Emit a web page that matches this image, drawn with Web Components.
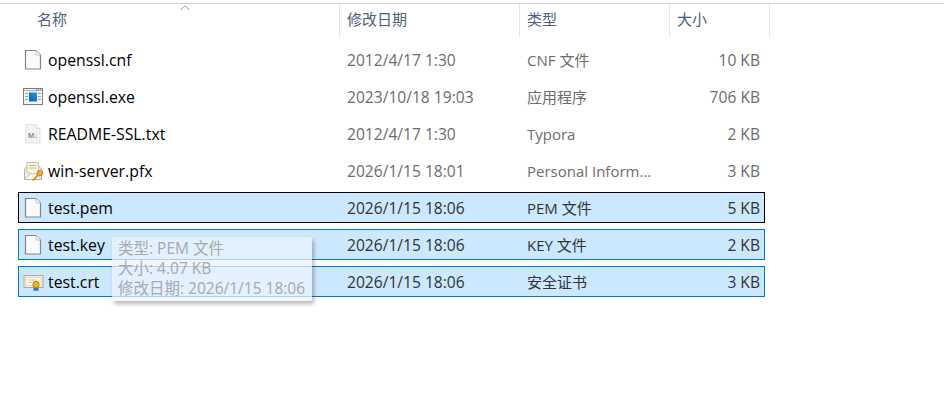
<!DOCTYPE html>
<html lang="zh-CN">
<head>
<meta charset="utf-8">
<title>test</title>
<style>
html, body { margin: 0; height: 100%; background: #fff; overflow: hidden; }
body { font-family: "Open Sans", "Noto Sans CJK SC", sans-serif; }
</style>
</head>
<body>
<file-list>
  <file-row slot="row" name="openssl.cnf" date="2012/4/17 1:30" type="CNF 文件" size="10 KB" icon="blank"></file-row>
  <file-row slot="row" name="openssl.exe" date="2023/10/18 19:03" type="应用程序" size="706 KB" icon="exe"></file-row>
  <file-row slot="row" name="README-SSL.txt" date="2012/4/17 1:30" type="Typora" size="2 KB" icon="md"></file-row>
  <file-row slot="row" name="win-server.pfx" date="2026/1/15 18:01" type="Personal Inform..." size="3 KB" icon="pfx"></file-row>
  <file-row slot="row" name="test.pem" date="2026/1/15 18:06" type="PEM 文件" size="5 KB" icon="blank" state="focus"></file-row>
  <file-row slot="row" name="test.key" date="2026/1/15 18:06" type="KEY 文件" size="2 KB" icon="blank" state="selected"></file-row>
  <file-row slot="row" name="test.crt" date="2026/1/15 18:06" type="安全证书" size="3 KB" icon="crt" state="selected"></file-row>
  <file-tip slot="tip">
    <div>类型: PEM 文件</div>
    <div>大小: 4.07 KB</div>
    <div>修改日期: 2026/1/15 18:06</div>
  </file-tip>
</file-list>

<script>
const icons = {
  blank: `<svg width="20" height="22" viewBox="0 0 20 22">
    <path d="M2.500 1.500H13L17.500 6V20H2.500Z" fill="#fafafa" stroke="#858585" stroke-width="1.200"/>
    <path d="M13 1.500V6H17.500" fill="#fff" stroke="#c0c0c0"/>
  </svg>`,
  exe: `<svg width="20" height="22" viewBox="0 0 20 22">
    <defs><linearGradient id="g" x1="1" y1="0" x2="0" y2="1"><stop offset="0" stop-color="#1c9be8"/><stop offset="1" stop-color="#0a62b4"/></linearGradient></defs>
    <rect x=".5" y="2.500" width="19" height="16" fill="#f4f4f4" stroke="#7d7d7d"/>
    <path d="M1 4.500H19" stroke="#b5b5b5"/>
    <path d="M13 3.500H18" stroke="#8a8a8a" stroke-dasharray="1 1"/>
    <rect x="6" y="6.500" width="8" height="9" fill="url(#g)"/>
    <path d="M2 7.500H5M2 10.500H5M2 13.500H5M15 7.500H18M15 10.500H18M15 13.500H18" stroke="#a5a5a5"/>
  </svg>`,
  md: `<svg width="20" height="22" viewBox="0 0 20 22">
    <path d="M3 1.500H13L17 5.500V20H3Z" fill="#f3f3f3" stroke="#e2e2e2"/>
    <path d="M13 1.500V5.500H17" fill="#fbfbfb" stroke="#dcdcdc"/>
    <text x="10" y="15" text-anchor="middle" font-family="Liberation Sans, sans-serif" font-size="7.500" font-weight="700" fill="#8e8e8e">M↓</text>
  </svg>`,
  pfx: `<svg width="22" height="22" viewBox="0 0 22 22">
    <path d="M2.500 9L6 5.500H16L19.500 9V19.500H2.500Z" fill="#ececec" stroke="#b5b2aa"/>
    <path d="M5 2.500H16.500V12L11 15L5 12Z" fill="#fbf5e2" stroke="#cbbf9c"/>
    <path d="M7 5.500H14.500M7 8H14.500" stroke="#c9b784"/>
    <path d="M2.500 19L9 13L11 14.500L13 13L19.500 19" fill="#f8f8f8" stroke="#c2bfb6"/>
    <circle cx="18" cy="13" r="2.800" fill="#e8a93a" stroke="#c98c1c"/>
    <path d="M16 15L10.500 20.500M12.500 18.500L14 20" stroke="#dd9d2c" stroke-width="2" fill="none"/>
  </svg>`,
  crt: `<svg width="22" height="22" viewBox="0 0 22 22">
    <rect x="2" y="4.500" width="19" height="12" fill="#f6f1e2" stroke="#b3a88e"/>
    <rect x="4" y="6.500" width="15" height="8" fill="#fdfbf3" stroke="#e0d8bf"/>
    <path d="M6 9H15M6 11.500H10" stroke="#cfc7aa"/>
    <path d="M11.500 15V20.500L13 19L14 20.500L15 19L16.500 20.500V15Z" fill="#2f6fc4"/>
    <circle cx="14" cy="13.500" r="3.200" fill="#eeb11f" stroke="#c6860f"/>
  </svg>`
};

const rowTpl = document.createElement('template');
rowTpl.innerHTML = `
<style>
:host {
    display: grid;
    grid-template-columns: 328px 180px 150px 83px;
    box-sizing: border-box;
    width: 747px;
    height: 31px;
    align-items: center;
    border: 1px solid transparent;
    font-size: 15.6px;
    color: #6d6d6d;
    white-space: nowrap;
}
:host([state="selected"]), :host([state="focus"]) {
    background: #cce8ff;
    color: #333;
}
:host([state="selected"]) { border-color: #0078d7; }
:host([state="focus"]) { border-color: #000; }
.name { display: flex; align-items: center; color: #000; font-size: 15.8px; }
.icon { width: 20px; margin-left: 4px; margin-right: 5px; display: flex; justify-content: center; }
.icon svg { flex: none; }
.type { font-size: 15px; }
.size { text-align: right; }
</style>
<div class="name"><span class="icon"></span><span class="label"></span></div>
<div class="date"></div>
<div class="type"></div>
<div class="size"></div>
`;
class FileRow extends HTMLElement {
    constructor() {
        super();
        this.shadow = this.attachShadow({mode: 'open'});
        this.shadow.append(rowTpl.content.cloneNode(true));
    }
    connectedCallback() {
        this.shadow.querySelector('.icon').innerHTML = icons[this.getAttribute('icon')];
        this.shadow.querySelector('.label').textContent = this.getAttribute('name');
        this.shadow.querySelector('.date').textContent = this.getAttribute('date');
        this.shadow.querySelector('.type').textContent = this.getAttribute('type');
        this.shadow.querySelector('.size').textContent = this.getAttribute('size');
    }
}
customElements.define('file-row', FileRow);

const tipTpl = document.createElement('template');
tipTpl.innerHTML = `
<style>
:host {
    position: absolute;
    left: 112px;
    top: 237px;
    width: 200px;
    height: 64px;
    box-sizing: border-box;
    padding: 1px 6px;
    background: rgba(236, 243, 252, .72);
    box-shadow: 2px 3px 4px rgba(0, 0, 0, .28);
    border-radius: 2px;
    font-size: 15.5px;
    line-height: 20px;
    color: #a6a9ad;
    white-space: nowrap;
}
</style>
<slot></slot>
`;
class FileTip extends HTMLElement {
    constructor() {
        super();
        this.attachShadow({mode: 'open'}).append(tipTpl.content.cloneNode(true));
    }
}
customElements.define('file-tip', FileTip);

const listTpl = document.createElement('template');
listTpl.innerHTML = `
<style>
:host {
    display: block;
    position: relative;
    height: 100%;
    padding-top: 3px;
    box-sizing: border-box;
}
.head {
    display: grid;
    grid-template-columns: 340px 180px 150px 100px;
    height: 33px;
    border-top: 1px solid #cfcfcf;
    margin-bottom: 7px;
    font-size: 15px;
    color: #4c607a;
    width: 100%;
    position: relative;
}
.head div { border-right: 1px solid #e5e5e5; padding-left: 7px; line-height: 31px; }
.head div:first-child { padding-left: 37px; }
.arrow { position: absolute; left: 180px; top: 1px; }
.rows { display: flex; flex-direction: column; gap: 6px; margin-left: 18px; }
</style>
<div class="head">
  <div>名称</div><div>修改日期</div><div>类型</div><div>大小</div>
  <svg class="arrow" width="10" height="6" viewBox="0 0 10 6"><path d="M.5 5L5 1L9.500 5" fill="none" stroke="#9a9a9a"/></svg>
</div>
<div class="rows"><slot name="row"></slot></div>
<slot name="tip"></slot>
`;
class FileList extends HTMLElement {
    constructor() {
        super();
        this.attachShadow({mode: 'open'}).append(listTpl.content.cloneNode(true));
    }
}
customElements.define('file-list', FileList);
</script>
</body>
</html>
